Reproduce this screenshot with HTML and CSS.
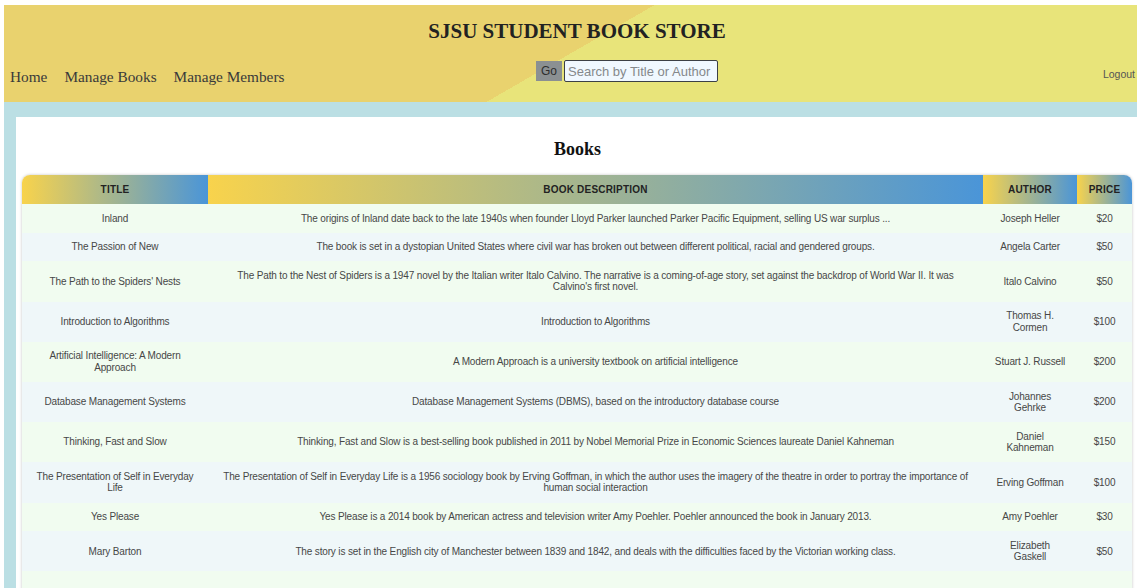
FILE: index.html
```html
<!DOCTYPE html>
<html lang="en">
<head>
<meta charset="utf-8">
<title>SJSU Student Book Store</title>
<link rel="stylesheet" href="styles.css">
</head>
<body>
<div class="page">
  <header class="site-header">
    <h1 class="site-title">SJSU STUDENT BOOK STORE</h1>
    <div class="header-row">
      <nav class="main-nav">
        <a href="#" class="nav-link">Home</a>
        <a href="#" class="nav-link">Manage Books</a>
        <a href="#" class="nav-link">Manage Members</a>
      </nav>
      <form class="search">
        <button type="button" class="go-btn">Go</button>
        <input class="search-input" type="text" placeholder="Search by Title or Author">
      </form>
      <a href="#" class="logout">Logout</a>
    </div>
  </header>
  <main class="main">
    <section class="panel">
      <h2 class="panel-title">Books</h2>
      <table class="books">
        <colgroup>
          <col class="c-title">
          <col class="c-desc">
          <col class="c-author">
          <col class="c-price">
        </colgroup>
        <thead>
          <tr>
            <th>TITLE</th>
            <th>BOOK DESCRIPTION</th>
            <th>AUTHOR</th>
            <th>PRICE</th>
          </tr>
        </thead>
        <tbody>
          <tr><td>Inland</td><td>The origins of Inland date back to the late 1940s when founder Lloyd Parker launched Parker Pacific Equipment, selling US war surplus ...</td><td>Joseph Heller</td><td>$20</td></tr>
          <tr><td>The Passion of New</td><td>The book is set in a dystopian United States where civil war has broken out between different political, racial and gendered groups.</td><td>Angela Carter</td><td>$50</td></tr>
          <tr><td>The Path to the Spiders' Nests</td><td>The Path to the Nest of Spiders is a 1947 novel by the Italian writer Italo Calvino. The narrative is a coming-of-age story, set against the backdrop of World War II. It was Calvino's first novel.</td><td>Italo Calvino</td><td>$50</td></tr>
          <tr><td>Introduction to Algorithms</td><td>Introduction to Algorithms</td><td>Thomas H. Cormen</td><td>$100</td></tr>
          <tr><td>Artificial Intelligence: A Modern Approach</td><td>A Modern Approach is a university textbook on artificial intelligence</td><td>Stuart J. Russell</td><td>$200</td></tr>
          <tr><td>Database Management Systems</td><td>Database Management Systems (DBMS), based on the introductory database course</td><td>Johannes Gehrke</td><td>$200</td></tr>
          <tr><td>Thinking, Fast and Slow</td><td>Thinking, Fast and Slow is a best-selling book published in 2011 by Nobel Memorial Prize in Economic Sciences laureate Daniel Kahneman</td><td>Daniel Kahneman</td><td>$150</td></tr>
          <tr><td>The Presentation of Self in Everyday Life</td><td>The Presentation of Self in Everyday Life is a 1956 sociology book by Erving Goffman, in which the author uses the imagery of the theatre in order to portray the importance of human social interaction</td><td>Erving Goffman</td><td>$100</td></tr>
          <tr><td>Yes Please</td><td>Yes Please is a 2014 book by American actress and television writer Amy Poehler. Poehler announced the book in January 2013.</td><td>Amy Poehler</td><td>$30</td></tr>
          <tr><td>Mary Barton</td><td>The story is set in the English city of Manchester between 1839 and 1842, and deals with the difficulties faced by the Victorian working class.</td><td>Elizabeth Gaskell</td><td>$50</td></tr>
          <tr class="row-empty"><td></td><td></td><td></td><td></td></tr>
        </tbody>
      </table>
    </section>
  </main>
</div>
</body>
</html>
```
FILE: styles.css
```css
html, body {
  margin: 0;
  padding: 0;
  background: #ffffff;
}

body {
  padding: 5px 5px 0 4px;
  height: 583px;
  overflow: hidden;
}

.page {
  display: flex;
  flex-direction: column;
  height: 100%;
  background: #bbdfe4;
}

.site-header {
  background: linear-gradient(150deg, #e9d26e 50%, #e8e47a 50%);
  padding: 14px 2px 16px 6px;
}

.site-title {
  margin: 0;
  padding-left: 9px;
  text-align: center;
  font-family: "Liberation Serif", "Times New Roman", serif;
  font-weight: bold;
  font-size: 21px;
  line-height: 24px;
  color: #222;
}

.header-row {
  margin-top: 17px;
  display: grid;
  grid-template-columns: 526px auto 1fr;
  align-items: start;
}

.main-nav {
  display: flex;
  gap: 17px;
  padding-top: 8px;
}

.nav-link {
  font-family: "Liberation Serif", "Times New Roman", serif;
  font-size: 15.3px;
  line-height: 18px;
  color: #3a3a3a;
  text-decoration: none;
}

.search {
  display: flex;
  align-items: center;
  gap: 2px;
  margin: 0;
}

.go-btn {
  width: 26px;
  height: 20px;
  padding: 0;
  border: none;
  border-radius: 0;
  background: #8b9092;
  color: #2e2e2e;
  font-family: "Liberation Sans", Arial, sans-serif;
  font-size: 12px;
  line-height: 20px;
}

.search-input {
  box-sizing: border-box;
  width: 154px;
  height: 22px;
  border: 1.5px solid #3c4046;
  border-radius: 2px;
  background: #f0f8ff;
  padding: 0 3px;
  font-family: "Liberation Sans", Arial, sans-serif;
  font-size: 13px;
  color: #333;
}

.search-input::placeholder {
  color: #85888b;
}

.logout {
  justify-self: end;
  padding-top: 8px;
  font-family: "Liberation Sans", Arial, sans-serif;
  font-size: 10.5px;
  line-height: 13px;
  color: #555;
  text-decoration: none;
}

.main {
  flex: 1;
  padding: 15px 0 0 12px;
  display: flex;
  min-height: 0;
}

.panel {
  flex: 1;
  background: #ffffff;
  padding: 22px 4px 0 6px;
  overflow: hidden;
}

.panel-title {
  margin: 0 0 15px;
  text-align: center;
  font-family: "Liberation Serif", "Times New Roman", serif;
  font-weight: bold;
  font-size: 18px;
  line-height: 21px;
  color: #111;
}

.books {
  width: 1110px;
  table-layout: fixed;
  border-collapse: separate;
  border-spacing: 0;
  font-family: "Liberation Sans", Arial, sans-serif;
  font-size: 10px;
  line-height: 11.5px;
  box-shadow: 0 0 3px rgba(0, 0, 0, 0.25);
  border-radius: 8px 8px 0 0;
}

.c-title { width: 186px; }
.c-desc { width: 775px; }
.c-author { width: 94px; }
.c-price { width: 55px; }

.books th {
  background: linear-gradient(to right, #f8d34c, #4a95d8);
  color: #222;
  font-weight: bold;
  font-size: 10px;
  letter-spacing: 0.2px;
  height: 29px;
  padding: 0 6px;
  text-align: center;
}

.books th:first-child { border-top-left-radius: 8px; }
.books th:last-child { border-top-right-radius: 8px; }

.books td {
  padding: 8.6px 10px;
  text-align: center;
  vertical-align: middle;
  color: #474747;
  letter-spacing: -0.15px;
}

.books tbody tr:nth-child(odd) td { background: #f1fcf0; }
.books tbody tr:nth-child(even) td { background: #eff7f9; }

.row-empty td { height: 24px; }
```
